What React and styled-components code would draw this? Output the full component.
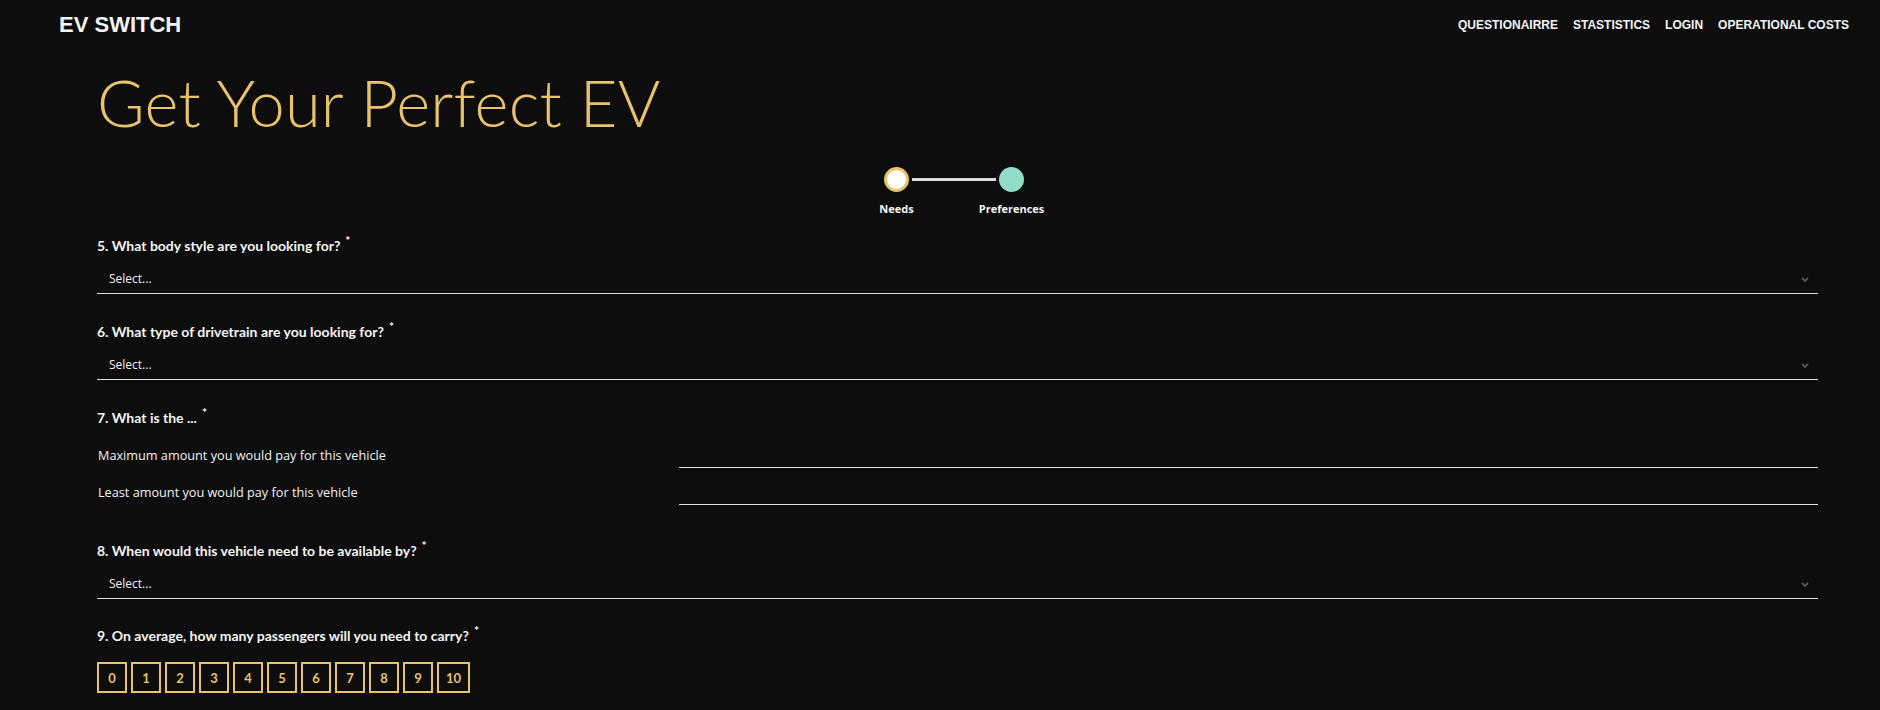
import React from "react"
import styled, { createGlobalStyle } from "styled-components"

const GOLD = "#e8c36b"

const GlobalStyle = createGlobalStyle`
  html, body {
    margin: 0;
    padding: 0;
    background: #0d0d0d;
    color: #f2f2f2;
    font-family: "Open Sans", "Liberation Sans", sans-serif;
  }
  * { box-sizing: border-box; }
`

const Nav = styled.nav`
  height: 50px;
  display: flex;
  align-items: center;
  justify-content: space-between;
  padding: 0 31px 0 59px;
`
const Brand = styled.div`
  font-family: "Liberation Sans", Arial, sans-serif;
  font-weight: 700;
  font-size: 22px;
  color: #f4f4f4;
`
const NavLinks = styled.div`
  display: flex;
  gap: 15px;
`
const NavLink = styled.a`
  font-family: "Liberation Sans", Arial, sans-serif;
  font-weight: 700;
  font-size: 12px;
  color: #f4f4f4;
  text-decoration: none;
  cursor: pointer;
`

const Main = styled.main`
  padding: 13px 62px 40px 97px;
`
const Title = styled.h1`
  margin: 0;
  font-family: Lato, "Open Sans", sans-serif;
  font-weight: 300;
  font-size: 65px;
  line-height: 1.2;
  letter-spacing: 0.2px;
  color: ${GOLD};
`

// Stepper
const Stepper = styled.div`
  display: flex;
  justify-content: center;
  align-items: flex-start;
  margin: 26px 0 20px -7px;
`
const Step = styled.div`
  width: 25px;
  display: flex;
  flex-direction: column;
  align-items: center;
  gap: 10px;
`
const Dot = styled.div`
  width: 25px;
  height: 25px;
  border-radius: 50%;
  background: ${(p) => (p.$done ? "#fff" : "#8fdcc9")};
  border: ${(p) => (p.$done ? `3px solid ${GOLD}` : "none")};
`
const Connector = styled.div`
  width: 84px;
  height: 3px;
  margin: 11px 3px 0;
  background: #dcdcdc;
`
const StepLabel = styled.span`
  font-size: 11px;
  font-weight: 700;
  line-height: 14px;
  white-space: nowrap;
  color: #f4f4f4;
`

// Questions
const Question = styled.section`
  margin-bottom: ${(p) => p.$gap || 28}px;
`
const Label = styled.div`
  font-family: Lato, "Open Sans", sans-serif;
  font-weight: 700;
  font-size: 14px;
  line-height: 20px;
  color: #f4f4f4;
  display: flex;
  align-items: flex-start;
`
const Req = styled.sup`
  font-size: 12px;
  line-height: 10px;
  margin-left: 5px;
`
const Select = styled.div`
  margin-top: 3px;
  height: 35px;
  display: flex;
  align-items: flex-end;
  justify-content: space-between;
  padding: 0 9px 6px 12px;
  border-bottom: 1px solid #dedede;
  font-size: 12px;
  line-height: 16px;
  color: #f2f2f2;
`
const Chevron = styled.svg`
  margin-bottom: 5px;
`
const Rows = styled.div`
  display: flex;
  flex-direction: column;
  gap: 7px;
  margin-top: 10px;
`
const Row = styled.div`
  display: grid;
  grid-template-columns: 582px 1fr;
  align-items: end;
`
const RowText = styled.span`
  font-size: 12.7px;
  line-height: 16px;
  padding: 0 0 5px 1px;
`
const Field = styled.div`
  height: 30px;
  border-bottom: 1px solid #dedede;
`
const Options = styled.div`
  display: flex;
  gap: 4px;
  margin-top: 16px;
`
const Option = styled.button`
  min-width: 30px;
  height: 31px;
  padding: 0 7px;
  border: 2px solid ${GOLD};
  background: transparent;
  color: ${GOLD};
  font-family: Lato, "Open Sans", sans-serif;
  font-weight: 700;
  font-size: 13px;
  cursor: pointer;
`

const ChevronIcon = () => (
  <Chevron width="8" height="5" viewBox="0 0 8 5">
    <polyline points="1,1 4,4 7,1" fill="none" stroke="#555" strokeWidth="1.8" />
  </Chevron>
)

const SelectField = () => (
  <Select>
    <span>Select...</span>
    <ChevronIcon />
  </Select>
)

export default function App() {
  return (
    <>
      <GlobalStyle />
      <Nav>
        <Brand>EV SWITCH</Brand>
        <NavLinks>
          <NavLink>QUESTIONAIRRE</NavLink>
          <NavLink>STASTISTICS</NavLink>
          <NavLink>LOGIN</NavLink>
          <NavLink>OPERATIONAL COSTS</NavLink>
        </NavLinks>
      </Nav>
      <Main>
        <Title>Get Your Perfect EV</Title>

        <Stepper>
          <Step>
            <Dot $done />
            <StepLabel>Needs</StepLabel>
          </Step>
          <Connector />
          <Step>
            <Dot />
            <StepLabel>Preferences</StepLabel>
          </Step>
        </Stepper>

        <Question>
          <Label>5. What body style are you looking for?<Req>*</Req></Label>
          <SelectField />
        </Question>

        <Question>
          <Label>6. What type of drivetrain are you looking for?<Req>*</Req></Label>
          <SelectField />
        </Question>

        <Question $gap={36}>
          <Label>7. What is the ... <Req>*</Req></Label>
          <Rows>
            <Row>
              <RowText>Maximum amount you would pay for this vehicle</RowText>
              <Field />
            </Row>
            <Row>
              <RowText>Least amount you would pay for this vehicle</RowText>
              <Field />
            </Row>
          </Rows>
        </Question>

        <Question $gap={27}>
          <Label>8. When would this vehicle need to be available by?<Req>*</Req></Label>
          <SelectField />
        </Question>

        <Question>
          <Label>9. On average, how many passengers will you need to carry?<Req>*</Req></Label>
          <Options>
            {[0, 1, 2, 3, 4, 5, 6, 7, 8, 9, 10].map((n) => (
              <Option key={n}>{n}</Option>
            ))}
          </Options>
        </Question>
      </Main>
    </>
  )
}
